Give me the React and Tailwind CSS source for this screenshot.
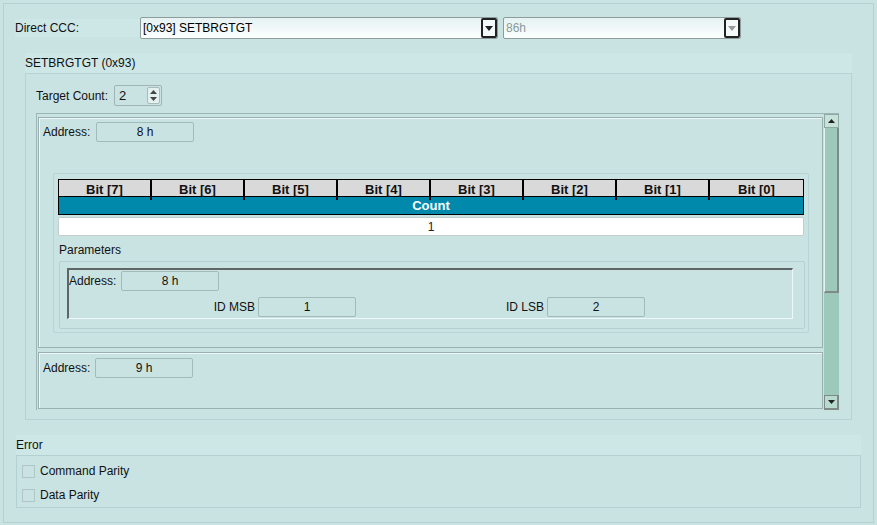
import React from 'react';

const Field = ({ value, className = '' }) => (
  <div
    className={`h-[20px] flex items-center justify-center rounded-[2px] border border-[#a3baba] bg-[#c9e3e3] text-[#111] ${className}`}
  >
    {value}
  </div>
);

const Combo = ({ value, width, disabled }) => (
  <div
    className={`h-[22px] ${width} flex items-stretch rounded-[2px] border border-[#8e9c9c] bg-gradient-to-b from-[#e6f2f2] to-[#fbfefe]`}
  >
    <div className={`flex-1 flex items-center pl-[2px] ${disabled ? 'text-[#8a9a9a]' : 'text-black'}`}>{value}</div>
    <div className="w-[16px] border-2 border-[#222] rounded-[2px] bg-[#f4fafa] flex items-center justify-center">
      <svg width="8" height="5" viewBox="0 0 8 5">
        <path d="M0 0h8L4 5z" fill={disabled ? '#999' : '#222'} />
      </svg>
    </div>
  </div>
);

const Checkbox = ({ label }) => (
  <div className="flex items-center h-[24px]">
    <div className="ml-[5px] w-[13px] h-[13px] border border-[#b0c6c6] bg-[#c9e3e3]" />
    <span className="ml-[5px]">{label}</span>
  </div>
);

const bits = ['Bit [7]', 'Bit [6]', 'Bit [5]', 'Bit [4]', 'Bit [3]', 'Bit [2]', 'Bit [1]', 'Bit [0]'];

export default function App() {
  return (
    <div
      className="w-[877px] h-[525px] bg-[#c9e3e3] pt-[3px] pl-[3px] text-[12px] text-[#111] overflow-hidden"
      style={{ fontFamily: '"Liberation Sans", Arial, sans-serif' }}
    >
      <div className="w-[871px] h-[520px] border border-[#b2d2d2] flex flex-col">
        {/* Direct CCC row */}
        <div className="mt-[13px] flex items-center h-[22px]">
          <div className="ml-[11px] w-[125px] h-[18px] flex items-center bg-[#cde6e6]">Direct CCC:</div>
          <Combo value="[0x93] SETBRGTGT" width="w-[358px]" />
          <div className="w-[5px]" />
          <Combo value="86h" width="w-[238px]" disabled />
        </div>

        {/* SETBRGTGT section */}
        <div className="mt-[14px] ml-[21px] w-[827px] h-[20px] flex items-center bg-[#cde6e6]">SETBRGTGT (0x93)</div>
        <div className="ml-[21px] w-[827px] h-[347px] border border-[#b5d3d3] flex flex-col">
          <div className="mt-[11px] ml-[10px] h-[21px] flex items-center">
            <span className="w-[78px]">Target Count:</span>
            <div className="w-[48px] h-[21px] flex rounded-[2px] border border-[#a0b4b4] bg-[#c9e3e3]">
              <div className="flex-1 flex items-center pl-[4px] text-[13px]">2</div>
              <div className="w-[13px] my-[1px] mr-[1px] rounded-[2px] border border-[#a8bcbc] bg-[#e4f0f0] flex flex-col items-center justify-center gap-[3px]">
                <svg width="7" height="4" viewBox="0 0 7 4">
                  <path d="M0 4h7L3.5 0z" fill="#444" />
                </svg>
                <svg width="7" height="4" viewBox="0 0 7 4">
                  <path d="M0 0h7L3.5 4z" fill="#444" />
                </svg>
              </div>
            </div>
          </div>

          {/* scroll panel */}
          <div className="mt-[7px] ml-[10px] w-[803px] h-[297px] border-t border-l border-[#9db5b5] flex">
            <div className="w-[787px] h-full overflow-hidden flex flex-col">
              {/* item 1 */}
              <div className="mt-[3px] ml-[1px] w-[785px] h-[231px] shrink-0 border border-[#98b0b0] shadow-[inset_1px_1px_0_#eef8f8] flex flex-col">
                <div className="mt-[4px] ml-[4px] flex items-center">
                  <span className="w-[53px]">Address:</span>
                  <Field value="8 h" className="w-[98px]" />
                </div>
                <div className="mt-[31px] ml-[14px] w-[756px] h-[160px] border border-[#b8d5d5] rounded-[2px] pl-[4px] pt-[5px]">
                  <div className="w-[746px]">
                    <div className="grid grid-cols-8 h-[18px] border border-black bg-[#d9d9d9] font-bold text-[13px]">
                      {bits.map((b, i) => (
                        <div
                          key={b}
                          className={`flex items-center justify-center ${i < 7 ? 'border-r-2 border-black' : ''}`}
                        >
                          {b}
                        </div>
                      ))}
                    </div>
                    <div className="h-[18px] border border-t-0 border-black bg-[#0089aa] text-white font-bold text-[13px] flex items-center justify-center">
                      Count
                    </div>
                    <div className="mt-[2px] h-[19px] bg-white border border-[#c4cccc] rounded-[2px] flex items-center justify-center text-[#222]">
                      1
                    </div>
                  </div>
                  <div className="mt-[7px] ml-[1px] h-[14px] flex items-center">Parameters</div>
                  <div className="mt-[4px] ml-[1px] w-[746px] h-[68px] border border-[#b4d1d1] rounded-[2px] pl-[7px] pt-[6px]">
                    <div className="w-[726px] h-[51px] border-t-2 border-l-2 border-t-[#5e6666] border-l-[#5e6666] border-b border-r border-b-[#eef8f8] border-r-[#eef8f8] flex flex-col">
                      <div className="mt-[1px] flex items-center">
                        <span className="w-[52px]">Address:</span>
                        <Field value="8 h" className="w-[98px]" />
                      </div>
                      <div className="mt-[6px] flex items-center">
                        <span className="w-[189px] text-right pr-[3px]">ID MSB</span>
                        <Field value="1" className="w-[98px]" />
                        <span className="w-[191px] text-right pr-[3px]">ID LSB</span>
                        <Field value="2" className="w-[98px]" />
                      </div>
                    </div>
                  </div>
                </div>
              </div>
              {/* item 2 */}
              <div className="mt-[4px] ml-[1px] w-[785px] h-[57px] shrink-0 border border-[#98b0b0] shadow-[inset_1px_1px_0_#eef8f8] flex flex-col">
                <div className="mt-[5px] ml-[4px] flex items-center">
                  <span className="w-[52px]">Address:</span>
                  <Field value="9 h" className="w-[98px]" />
                </div>
              </div>
            </div>

            {/* scrollbar */}
            <div className="w-[15px] h-full flex flex-col bg-[#9dc9ba]">
              <div className="h-[14px] border border-[#8fa8a0] bg-[#c6e2da] flex items-center justify-center">
                <svg width="7" height="4" viewBox="0 0 7 4">
                  <path d="M0 4h7L3.5 0z" fill="#222" />
                </svg>
              </div>
              <div className="h-[165px] border-l border-l-[#e2f2ec] border-r-2 border-b-2 border-[#7d8a86] bg-[#9dc9ba]" />
              <div className="flex-1" />
              <div className="h-[15px] border border-[#7d8a86] border-r-2 border-b-2 bg-[#b7dbce] flex items-center justify-center">
                <svg width="7" height="4" viewBox="0 0 7 4">
                  <path d="M0 0h7L3.5 4z" fill="#222" />
                </svg>
              </div>
            </div>
          </div>
        </div>

        {/* Error section */}
        <div className="mt-[15px] ml-[12px] w-[845px] h-[20px] flex items-center bg-[#cde6e6]">Error</div>
        <div className="ml-[12px] w-[845px] h-[53px] border border-[#b3d1d1] pt-[3px]">
          <Checkbox label="Command Parity" />
          <Checkbox label="Data Parity" />
        </div>
      </div>
    </div>
  );
}
